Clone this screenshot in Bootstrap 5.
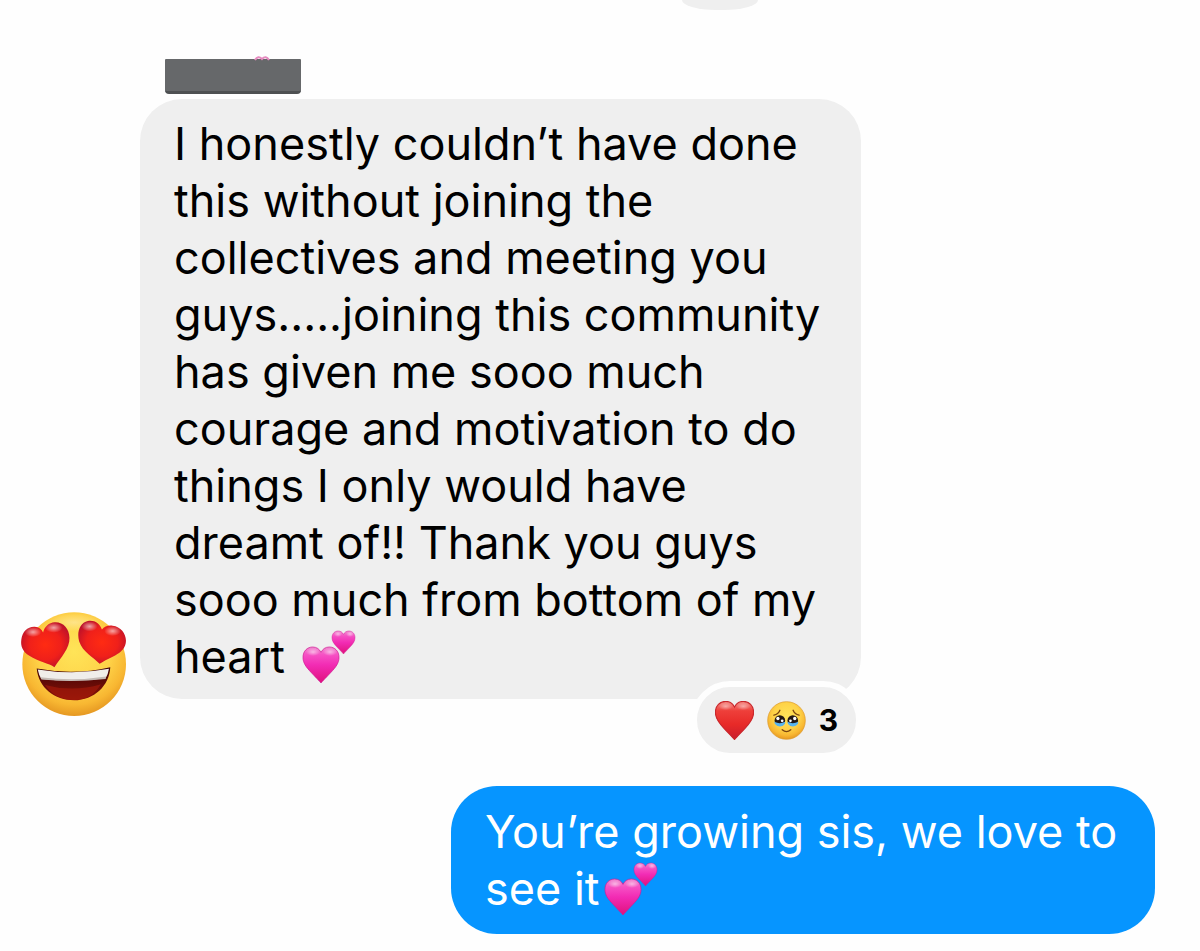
<!DOCTYPE html>
<html lang="en">
<head>
<meta charset="utf-8">
<meta name="viewport" content="width=device-width, initial-scale=1">
<title>Group chat</title>
<link href="https://cdn.jsdelivr.net/npm/bootstrap@5.3.0/dist/css/bootstrap.min.css" rel="stylesheet">
<style>
  body { background: #fefefe; color: #000; font-family: Inter, "Liberation Sans", sans-serif; }
  .chat { padding: 0 45px 16px 20px; }
  .prev-reaction { width: 76px; height: 10px; margin-left: 662px; background: #efefef; border-radius: 0 0 34px 34px / 0 0 10px 10px; }
  .sender { width: 136px; height: 35px; margin: 49px 0 5px 145px; background: #66686a; border-bottom: 3px solid #4e5052; border-radius: 1px 1px 4px 4px; }
  .sender svg { left: 89px; top: -3px; }
  .avatar { width: 107px; height: 107px; margin: 0 13px -18px 0; }
  .bubble { font-size: 45px; line-height: 57px; border-radius: 42px; }
  .bubble p { margin: 0; }
  .received { background: #efefef; width: 721px; padding: 16px 24px 14px 34px; }
  .sent { background: #0695ff; color: #fff; width: 704px; padding: 17px 24px 17px 34px; margin-top: 87px; border-radius: 46px; }
  .twohearts { width: 54px; height: 54px; vertical-align: -11px; }
  .reactions { right: -1px; bottom: -60px; height: 78px; padding: 0 18px; gap: 13px; background: #efefef; border: 6px solid #fefefe; border-radius: 39px; font-size: 30px; line-height: 36px; font-weight: 700; }
  .reactions svg { width: 39px; height: 39px; }
</style>
</head>
<body>
<svg width="0" height="0" class="position-absolute" aria-hidden="true">
  <defs>
    <linearGradient id="pink" x1="0" y1="0" x2="0" y2="1"><stop offset="0" stop-color="#f08ad0"/><stop offset=".22" stop-color="#f650c4"/><stop offset=".5" stop-color="#f22cb4"/><stop offset="1" stop-color="#e0107c"/></linearGradient>
    <linearGradient id="red" x1="0" y1="0" x2="0" y2="1"><stop offset="0" stop-color="#f58a84"/><stop offset=".25" stop-color="#ee3f3a"/><stop offset=".6" stop-color="#e82a28"/><stop offset="1" stop-color="#c81c2c"/></linearGradient>
    <radialGradient id="eyeheart" cx=".5" cy=".5" r=".6"><stop offset="0" stop-color="#ff2b12"/><stop offset=".55" stop-color="#f0201a"/><stop offset="1" stop-color="#b60f2c"/></radialGradient>
    <radialGradient id="face" cx=".5" cy=".38" r=".64"><stop offset="0" stop-color="#ffe458"/><stop offset=".55" stop-color="#fed248"/><stop offset=".8" stop-color="#f8b732"/><stop offset="1" stop-color="#e2921f"/></radialGradient>
    <linearGradient id="mouth" x1="0" y1="0" x2="0" y2="1"><stop offset="0" stop-color="#3c0205"/><stop offset="1" stop-color="#8e1408"/></linearGradient>
    <radialGradient id="shine"><stop offset="0" stop-color="#fff" stop-opacity=".75"/><stop offset="1" stop-color="#fff" stop-opacity="0"/></radialGradient>
    <path id="heart" d="M50 100C46 95 35 84 22 70C8 55 0 44 0 29C0 11 12 0 27 0C38 0 46 6 50 15C54 6 62 0 73 0C88 0 100 11 100 29C100 44 92 55 78 70C65 84 54 95 50 100Z"/>
    <symbol id="twohearts" viewBox="0 0 54 54">
      <g fill="url(#pink)" stroke="#d01c94" stroke-width="2">
        <use href="#heart" transform="translate(1 17) scale(.36)"/>
        <use href="#heart" transform="translate(30 1) scale(.23)"/>
      </g>
      <g fill="url(#shine)" opacity=".7"><ellipse cx="11" cy="22" rx="7" ry="4"/><ellipse cx="28" cy="22" rx="7" ry="4"/><ellipse cx="36" cy="4" rx="4" ry="3"/><ellipse cx="48" cy="4" rx="4" ry="3"/></g>
    </symbol>
  </defs>
</svg>

<main class="chat container-fluid d-flex flex-column">
  <div class="prev-reaction"></div>

  <div class="sender position-relative">
    <svg class="position-absolute" width="17" height="5" viewBox="0 0 17 5" fill="none" stroke="#e58abf" stroke-width="2" aria-hidden="true"><path d="M1 4Q4 -1 8 3Q12 -1 15 4"/></svg>
  </div>

  <section class="d-flex align-items-end">
    <svg class="avatar flex-shrink-0" viewBox="30 30 320 320" role="img" aria-label="Smiling face with heart eyes">
      <circle cx="192" cy="192" r="155" fill="url(#face)"/>
      <ellipse cx="192" cy="67" rx="80" ry="27" fill="url(#shine)" opacity=".45"/>
      <path d="M80 205Q193 226 300 201C297 257 252 299 192 300C133 300 85 262 80 205Z" fill="url(#mouth)"/>
      <path d="M105 254Q188 277 272 252Q244 299 192 299Q135 298 105 254Z" fill="#a51a0b" opacity=".65"/>
      <path d="M83 208Q192 226 296 206Q294 221 286 234Q191 247 94 236Q86 224 83 208Z" fill="#f0eeea"/>
      <path d="M91 231Q191 244 288 229L286 236Q191 247 94 238Z" fill="#c4bbb5"/>
      <g fill="url(#eyeheart)">
        <path d="M133 201C117 190 85 184 58 167C38 154 31 138 34 118C37 94 53 79 74 80C87 81 95 87 99 97C104 80 116 68 134 67C160 66 177 86 178 113C179 145 152 172 133 201Z"/>
        <path d="M268 191C250 170 218 157 207 124C199 97 209 68 233 63C252 59 268 70 275 88C282 80 293 75 307 77C334 80 351 106 346 130C339 163 299 170 268 191Z"/>
      </g>
      <g fill="url(#shine)" opacity=".8"><ellipse cx="69" cy="96" rx="25" ry="15"/><ellipse cx="131" cy="83" rx="26" ry="15"/><ellipse cx="238" cy="79" rx="24" ry="15"/><ellipse cx="307" cy="93" rx="25" ry="15"/></g>
    </svg>

    <div class="bubble received position-relative">
      <p>I honestly couldn’t have done<br>this without joining the<br>collectives and meeting you<br>guys.....joining this community<br>has given me sooo much<br>courage and motivation to do<br>things I only would have<br>dreamt of!! Thank you guys<br>sooo much from bottom of my<br>heart <svg class="twohearts ms-1" role="img" aria-label="Two hearts"><use href="#twohearts"/></svg></p>

      <div class="reactions position-absolute d-flex align-items-center">
        <svg viewBox="-1 -1 102 102" role="img" aria-label="Red heart">
          <use href="#heart" fill="url(#red)" stroke="#c9272c" stroke-width="3"/>
          <g fill="url(#shine)" opacity=".6"><ellipse cx="27" cy="13" rx="19" ry="10"/><ellipse cx="73" cy="13" rx="19" ry="10"/></g>
        </svg>
        <svg viewBox="258 121 118 118" role="img" aria-label="Face holding back tears">
          <circle cx="317" cy="180" r="57" fill="url(#face)" stroke="#dc9a2a" stroke-width="2"/>
          <g fill="none" stroke="#7a4410" stroke-width="4" stroke-linecap="round"><path d="M279 164Q292 161 297 149M337 149Q342 161 355 164M304 208Q317 219 330 208"/></g>
          <circle cx="297" cy="180" r="16" fill="#231815"/><circle cx="336" cy="180" r="16" fill="#231815"/>
          <path d="M280 184Q297 193 313 184Q313 197 297 198Q282 197 280 184ZM320 184Q336 193 353 184Q352 197 336 198Q321 197 320 184Z" fill="#58b5ef"/>
          <g fill="#fff"><circle cx="291" cy="174" r="5"/><circle cx="304" cy="181" r="4"/><circle cx="342" cy="174" r="5"/><circle cx="329" cy="181" r="4"/></g>
        </svg>
        <span>3</span>
      </div>
    </div>
  </section>

  <section class="bubble sent align-self-end">
    <p>You’re growing sis, we love to<br>see it<svg class="twohearts ms-1" role="img" aria-label="Two hearts"><use href="#twohearts"/></svg></p>
  </section>
</main>
<script src="https://cdn.jsdelivr.net/npm/bootstrap@5.3.0/dist/js/bootstrap.bundle.min.js"></script>
</body>
</html>
